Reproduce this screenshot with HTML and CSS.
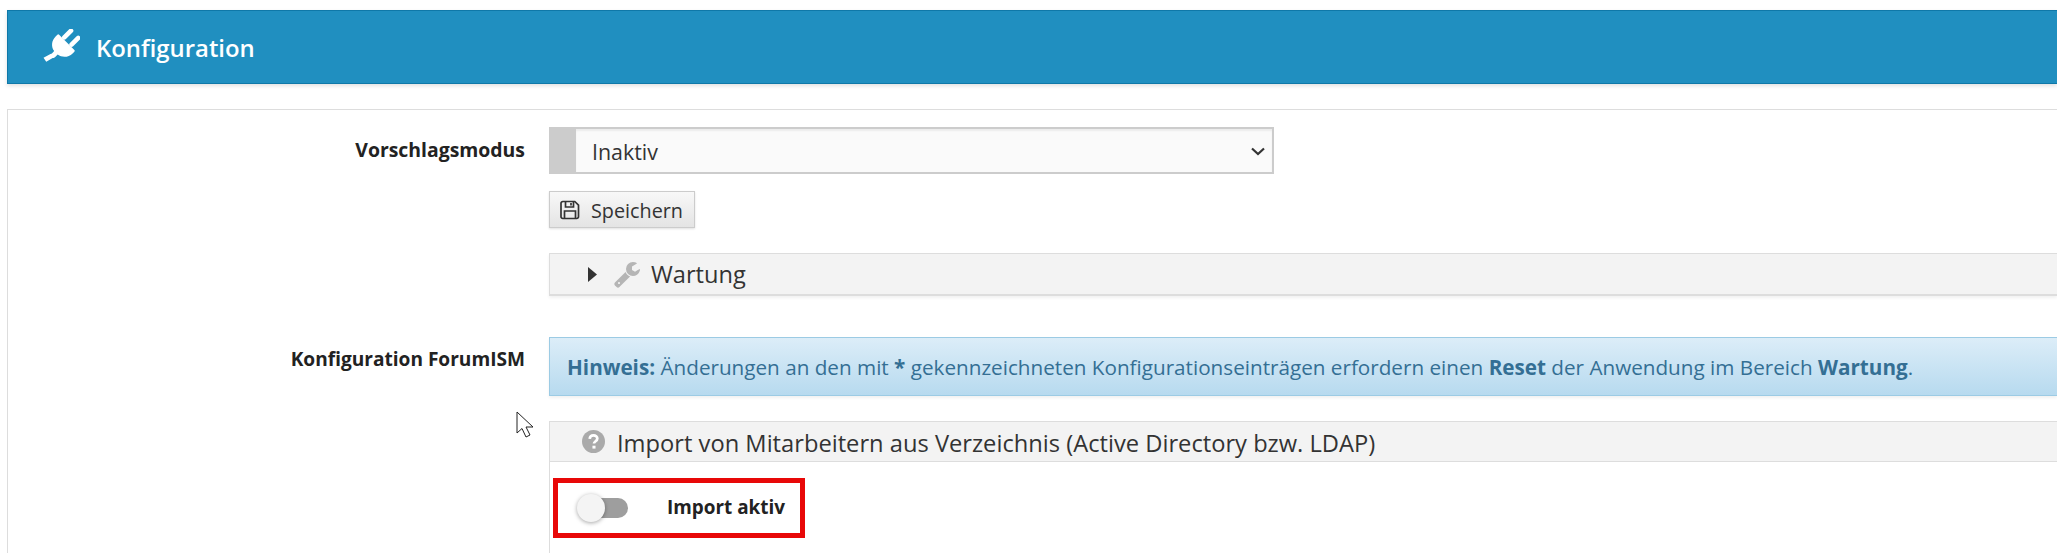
FILE: index.html
```html
<!DOCTYPE html>
<html lang="de">

<head>
    <meta charset="UTF-8">
    <title>Konfiguration</title>
    <link rel="stylesheet" href="styles.css">
</head>

<body>

    <header class="page-header">
        <svg class="plug-icon" viewBox="0 0 24 24">
            <g transform="rotate(45 12 12)" fill="#fff">
                <rect x="7.2" y="-1.500" width="3" height="9" rx="1.400"/>
                <rect x="13.8" y="-1.500" width="3" height="9" rx="1.400"/>
                <path d="M5 7.200h14a.8.8 0 0 1 .8.8v1.600c0 3.900-2.800 6.800-6.300 7.400v2c0 .8-.2 1.300-.7 1.900l-1.300 4.600-3-.5 1.400-5c.3-.4.400-.7.400-1.100v-1.900c-3.500-.6-6.100-3.500-6.100-7.400V8a.8.8 0 0 1 .8-.8z"/>
            </g>
        </svg>
        <h1>Konfiguration</h1>
    </header>

    <main class="panel">
        <section class="form-row first-row">
            <label class="row-label" for="mode-select">Vorschlagsmodus</label>
            <div class="row-content">
                <div class="select-wrap">
                    <select id="mode-select" class="mode-select">
                        <option>Inaktiv</option>
                    </select>
                    <svg class="chevron" viewBox="0 0 14 9"><path d="M1 1.500l6 5.500 6-5.500" fill="none" stroke="#333" stroke-width="2.200"/></svg>
                </div>
                <button class="save-button">
                    <svg class="save-icon" viewBox="0 0 20 20" fill="none" stroke="#333" stroke-width="1.700">
                        <path d="M2.800 1.500h12l3.700 3.700v11.500a1.800 1.800 0 0 1-1.800 1.800H2.800A1.800 1.800 0 0 1 1 16.700V3.300a1.800 1.800 0 0 1 1.800-1.800z"/>
                        <path d="M5.500 1.500v5.500h8V1.500M11 3v2.500"/>
                        <path d="M4.500 18.500v-7.500h11v7.500"/>
                    </svg>
                    <span class="save-label">Speichern</span>
                </button>
                <div class="maintenance-bar">
                    <svg class="caret-icon" viewBox="0 0 9 15"><path d="M0 0l9 7.500-9 7.500z" fill="#333"/></svg>
                    <svg class="wrench-icon" viewBox="0 0 1792 1792">
                        <path fill="#b5b5b5" d="M448 1472q0-26-19-45t-45-19-45 19-19 45 19 45 45 19 45-19 19-45zm644-420l-682 682q-37 37-90 37-52 0-91-37l-106-108q-38-36-38-90 0-53 38-91l681-681q39 98 114.500 173.500t173.500 114.500zm634-435q0 39-23 106-47 134-164.500 217.500t-258.500 83.500q-185 0-316.500-131.500t-131.500-316.500 131.500-316.500 316.500-131.500q58 0 121.500 16.500t107.500 46.500q16 11 16 28t-16 28l-293 169v224l193 107q5-3 79-48.500t135.500-81 70.500-35.500q15 0 23.500 10t8.500 25z"/>
                    </svg>
                    <span>Wartung</span>
                </div>
            </div>
        </section>

        <section class="form-row second-row">
            <div class="row-label">Konfiguration ForumISM</div>
            <div class="row-content">
                <div class="hint-box">
                    <strong>Hinweis:</strong> Änderungen an den mit <strong>*</strong> gekennzeichneten Konfigurationseinträgen erfordern einen <strong>Reset</strong> der Anwendung im Bereich <strong>Wartung</strong>.
                </div>
                <div class="import-box">
                    <div class="import-title">
                        <svg class="help-icon" viewBox="0 0 24 24">
                            <circle cx="12" cy="12" r="12" fill="#aaa"/>
                            <path d="M8 9.200c.2-2.400 1.900-3.600 4-3.600 2.300 0 4 1.400 4 3.300 0 2.900-3.500 2.800-3.500 5.300" fill="none" stroke="#fff" stroke-width="2.800"/>
                            <rect x="10.900" y="16.400" width="3.200" height="3" fill="#fff"/>
                        </svg>
                        <span>Import von Mitarbeitern aus Verzeichnis (Active Directory bzw. LDAP)</span>
                    </div>
                    <div class="import-body">
                        <div class="import-toggle">
                            <span class="toggle"></span>
                            <strong>Import aktiv</strong>
                        </div>
                    </div>
                </div>
            </div>
        </section>

        <!-- Mauszeiger aus dem Screenshot -->
        <svg class="cursor" viewBox="0 0 19 28">
            <path d="M1 1v21l5-4.500 4 8.500 4-2-4-8h7z" fill="#fff" stroke="#222" stroke-width="1"/>
        </svg>
    </main>

</body>

</html>
```

FILE: styles.css
```css
html,
body {
    height: 100%;
    overflow: hidden;
}

body {
    margin: 0;
    padding: 10px 0 0 7px;
    box-sizing: border-box;
    font-family: "Open Sans", "Noto Sans", sans-serif;
    color: #333;
    background: #fff;
}

.page-header {
    display: flex;
    align-items: center;
    height: 74px;
    box-sizing: border-box;
    padding-left: 35px;
    background: #208fc0;
    border: 1px solid #0f78a8;
    border-right: none;
    box-shadow: 0 2px 4px rgba(0, 0, 0, 0.12);
}

.plug-icon {
    width: 37px;
    height: 37px;
}

.page-header h1 {
    margin: 0 0 0 16px;
    font-size: 23.900px;
    font-weight: 600;
    color: #fff;
}

.panel {
    position: relative;
    margin-top: 25px;
    height: 460px;
    border: 1px solid #ddd;
    border-right: none;
    border-bottom: none;
}

.form-row {
    display: flex;
}

.first-row {
    padding-top: 17px;
}

.second-row {
    margin-top: 41px;
}

.row-label {
    width: 517px;
    flex: none;
    padding-top: 9px;
    font-size: 19.100px;
    font-weight: 700;
    color: #222;
    text-align: right;
}

.first-row .row-label {
    padding-top: 9px;
    font-size: 19.400px;
}

.row-content {
    flex: 1;
    margin-left: 24px;
}

.select-wrap {
    position: relative;
    width: 725px;
}

.mode-select {
    display: block;
    appearance: none;
    width: 100%;
    height: 47px;
    padding: 2px 0 0 16px;
    font-family: inherit;
    font-size: 21.400px;
    color: #333;
    background: #fafafa;
    border: 2px solid #ccc;
    border-left: 27px solid #ccc;
    border-radius: 0;
    box-shadow: inset 0 2px 2px rgba(0, 0, 0, 0.06);
}

.chevron {
    position: absolute;
    right: 9px;
    top: 20px;
    width: 14px;
    height: 9px;
}

.save-button {
    display: flex;
    align-items: center;
    gap: 11px;
    margin-top: 17px;
    width: 146px;
    height: 37px;
    padding: 0 0 0 10px;
    font-family: inherit;
    font-size: 19.800px;
    color: #333;
    background: linear-gradient(#f8f8f8, #e4e4e4);
    border: 1px solid #ccc;
    box-shadow: 0 1px 2px rgba(0, 0, 0, 0.12);
}

.save-icon {
    width: 20px;
    height: 20px;
}

.save-label {
    padding-top: 2px;
}

.maintenance-bar {
    display: flex;
    align-items: center;
    height: 43px;
    box-sizing: border-box;
    margin-top: 25px;
    padding-left: 38px;
    font-size: 23.600px;
    background: #f3f3f3;
    border-top: 1px solid #ddd;
    border-left: 1px solid #ddd;
    border-bottom: 2px solid #ddd;
    box-shadow: 0 2px 3px rgba(0, 0, 0, 0.06);
}

.caret-icon {
    width: 9px;
    height: 15px;
}

.wrench-icon {
    width: 28px;
    height: 28px;
    margin-left: 16px;
    margin-right: 10px;
}

.hint-box {
    height: 59px;
    box-sizing: border-box;
    padding: 0 0 0 17px;
    line-height: 58px;
    font-size: 20.680px;
    white-space: nowrap;
    color: #346f94;
    background: linear-gradient(#dcedf8, #b7daef);
    border: 1px solid #9ccbe4;
    border-right: none;
    box-shadow: 0 2px 3px rgba(0, 0, 0, 0.06);
}

.hint-box strong {
    font-weight: 700;
}

.import-box {
    margin-top: 25px;
    border-left: 1px solid #ddd;
    height: 140px;
}

.import-title {
    display: flex;
    align-items: center;
    height: 41px;
    box-sizing: border-box;
    padding-left: 32px;
    font-size: 23.700px;
    background: #f3f3f3;
    border-top: 1px solid #ddd;
    border-bottom: 1px solid #ddd;
}

.import-title span {
    padding-top: 2px;
}

.help-icon {
    width: 23px;
    height: 23px;
    margin-right: 12px;
}

.import-body {
    padding: 16px 0 0 3px;
}

.import-toggle {
    display: flex;
    align-items: center;
    width: 252px;
    height: 60px;
    box-sizing: border-box;
    padding-left: 24px;
    border: 5px solid #e80808;
    font-size: 18.900px;
    color: #222;
}

.import-toggle strong {
    font-weight: 700;
    margin-top: -3px;
}

.toggle {
    position: relative;
    display: block;
    width: 46px;
    height: 20px;
    margin-right: 39px;
    border-radius: 10px;
    background: #9e9e9e;
}

.toggle::before {
    content: "";
    position: absolute;
    top: -4px;
    left: -5px;
    width: 28px;
    height: 28px;
    border-radius: 50%;
    background: #f4f4f4;
    box-shadow: 0 1px 4px rgba(0, 0, 0, 0.35);
}

.cursor {
    position: absolute;
    left: 508px;
    top: 301px;
    width: 19px;
    height: 28px;
}
```
